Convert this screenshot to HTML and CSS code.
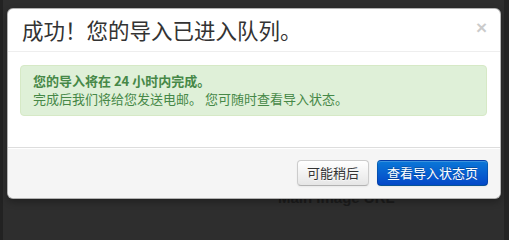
FILE: index.html
```html
<!DOCTYPE html>
<html lang="zh-CN">
<head>
<meta charset="utf-8">
<title>导入已进入队列</title>
<link rel="stylesheet" href="styles.css">
</head>
<body>
<div class="page">
  <div class="modal">
    <div class="modal-header">
      <h3 class="modal-title">成功！您的导入已进入队列。</h3>
      <span class="close">×</span>
    </div>
    <div class="modal-body">
      <div class="alert">
        <div class="alert-strong">您的导入将在 24 小时内完成。</div>
        <div>完成后我们将给您发送电邮。 您可随时查看导入状态。</div>
      </div>
    </div>
    <div class="modal-footer">
      <button class="btn">可能稍后</button>
      <button class="btn btn-primary">查看导入状态页</button>
    </div>
  </div>
  <div class="backdrop-label">Main Image URL</div>
</div>
</body>
</html>
```
FILE: styles.css
```css
* { box-sizing: border-box; }
html, body { margin: 0; padding: 0; }
body {
  width: 509px;
  height: 210px;
  overflow: hidden;
  background: linear-gradient(to right, #222 0 3px, #2e2e2e 3px 504px, #242424 504px);
  font-family: "Noto Sans CJK SC", "Liberation Sans", sans-serif;
}
.page {
  padding: 8px 0 0 7px;
}
.modal {
  position: relative;
  z-index: 1;
  width: 494px;
  height: 191px;
  background: #fff;
  border: 1px solid rgba(0,0,0,0.3);
  border-radius: 6px;
  box-shadow: 0 3px 7px rgba(0,0,0,0.3);
  display: flex;
  flex-direction: column;
}
.modal-header {
  height: 43px;
  padding: 9px 13px 9px 14px;
  border-bottom: 1px solid #eee;
  display: flex;
  align-items: center;
  justify-content: space-between;
}
.modal-title {
  margin: 0;
  font-size: 21.5px;
  line-height: 24px;
  font-weight: normal;
  color: #333;
}
.close {
  font-family: "Liberation Sans", sans-serif;
  font-size: 19px;
  font-weight: bold;
  line-height: 20px;
  color: #000;
  opacity: 0.2;
  margin-top: -5px;
}
.modal-body {
  height: 95px;
  padding: 13px 13px 0 12px;
}
.alert {
  height: 51px;
  padding: 6px 14px 0 12px;
  background: #dff0d8;
  border: 1px solid #d6e9c6;
  border-radius: 4px;
  color: #468847;
  font-size: 13px;
  line-height: 18px;
}
.alert-strong { font-weight: bold; }
.modal-footer {
  flex: 1;
  background: #f5f5f5;
  border-top: 1px solid #ddd;
  border-radius: 0 0 6px 6px;
  box-shadow: inset 0 1px 0 #fff;
  padding: 12px 12px 0 0;
  display: flex;
  justify-content: flex-end;
  align-items: flex-start;
  gap: 8px;
}
.btn {
  height: 26px;
  padding: 0 9px;
  font-family: "Noto Sans CJK SC", "Liberation Sans", sans-serif;
  font-size: 13px;
  line-height: 24px;
  color: #333;
  text-shadow: 0 1px 1px rgba(255,255,255,0.75);
  background: linear-gradient(#fff, #e6e6e6);
  border: 1px solid #ccc;
  border-bottom-color: #b3b3b3;
  border-radius: 4px;
  box-shadow: inset 0 1px 0 rgba(255,255,255,0.2), 0 1px 2px rgba(0,0,0,0.05);
}
.btn-primary {
  color: #fff;
  text-shadow: 0 -1px 0 rgba(0,0,0,0.25);
  background: linear-gradient(#0a78d8, #0448c8);
  border-color: rgba(0,0,0,0.15) rgba(0,0,0,0.15) rgba(0,0,0,0.3);
}
.backdrop-label {
  margin: -10px 0 0 271px;
  font-family: "Liberation Sans", sans-serif;
  font-size: 15px;
  font-weight: bold;
  line-height: 18px;
  color: #1c1c1c;
}
```
